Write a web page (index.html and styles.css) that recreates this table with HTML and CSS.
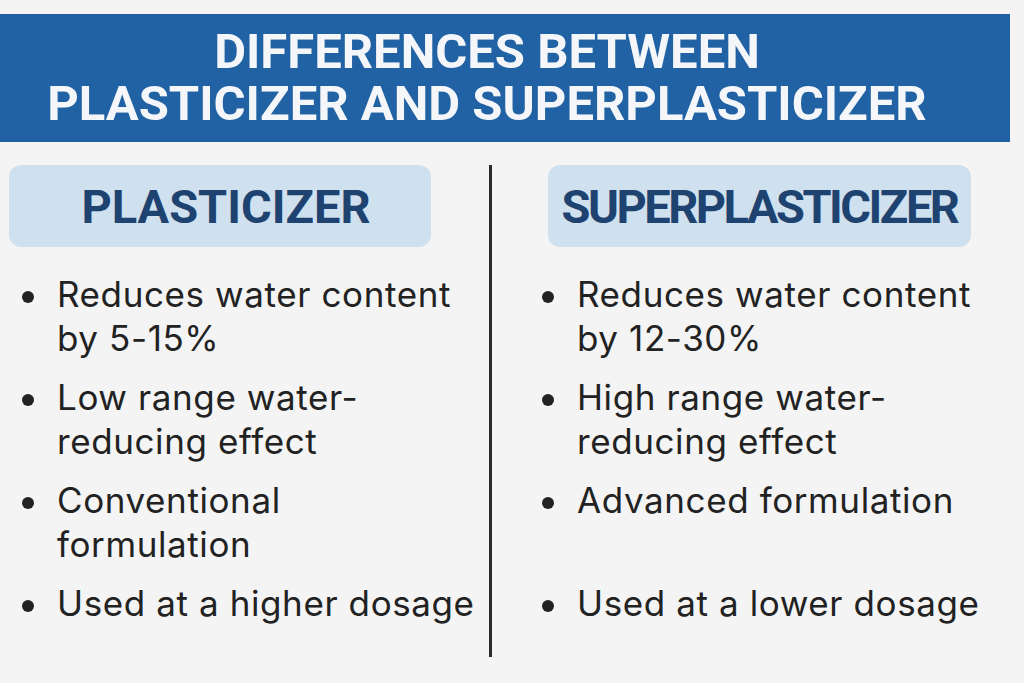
FILE: index.html
```html
<!DOCTYPE html>
<html lang="en">
  <head>
    <meta charset="UTF-8" />
    <meta name="viewport" content="width=device-width, initial-scale=1.0" />
    <title>Plasticizer vs Superplasticizer</title>
    <link rel="stylesheet" href="styles.css">
  </head>
  <body>
    <div class="banner">
      <h1>Differences between<br />plasticizer and superplasticizer</h1>
    </div>

    <div class="compare">
      <div class="column column-left">
        <div class="pill"><h2>Plasticizer</h2></div>
        <ul class="points">
          <li>Reduces water content by 5-15%</li>
          <li>Low range water-reducing effect</li>
          <li>Conventional formulation</li>
          <li>Used at a higher dosage</li>
        </ul>
      </div>

      <div class="divider"></div>

      <div class="column column-right">
        <div class="pill"><h2 class="tight">Superplasticizer</h2></div>
        <ul class="points">
          <li>Reduces water content by 12-30%</li>
          <li>High range water-reducing effect</li>
          <li>Advanced formulation</li>
          <li>Used at a lower dosage</li>
        </ul>
      </div>
    </div>
  </body>
</html>
```

FILE: styles.css
```css
/* Reset default margin and padding */
body,
h1,
h2,
ul,
li {
  margin: 0;
  padding: 0;
}

body {
  font-family: Inter, Roboto, "Liberation Sans", Arial, sans-serif;
  background-color: #f4f4f4;
  color: #222222;
}

/* Title bar */
.banner {
  margin: 14px 14px 0 0;
  height: 128px;
  background-color: #2062a3;
  display: flex;
  align-items: center;
  justify-content: center;
  padding-right: 36px;
}

.banner h1 {
  font-family: Roboto, "Liberation Sans", Arial, sans-serif;
  color: #f4f6f9;
  font-size: 49px;
  font-weight: 700;
  line-height: 52px;
  text-align: center;
  text-transform: uppercase;
}

/* Two columns with a rule between */
.compare {
  display: grid;
  grid-template-columns: 489px 3px 1fr;
  margin-top: 23px;
}

.divider {
  height: 492px;
  background-color: #2a2a2a;
}

.pill {
  height: 82px;
  background-color: #cfe0ef;
  border-radius: 12px;
  display: flex;
  align-items: center;
  justify-content: center;
}

.pill h2 {
  font-family: Roboto, "Liberation Sans", Arial, sans-serif;
  color: #1e4370;
  font-size: 47px;
  font-weight: 700;
  text-transform: uppercase;
}

.pill h2.tight {
  letter-spacing: -2.5px;
}

.column-left .pill {
  margin-left: 9px;
  width: 422px;
  padding-left: 12px;
  box-sizing: border-box;
}

.column-right .pill {
  margin-left: 56px;
  width: 423px;
}

.points {
  list-style: none;
  margin-top: 25px;
}

.points li {
  display: flex;
  align-items: flex-start;
  gap: 23px;
  min-height: 88px;
  margin-bottom: 15px;
  font-size: 35px;
  line-height: 44px;
  letter-spacing: 0.6px;
}

.points li::before {
  content: "";
  flex: none;
  width: 12px;
  height: 12px;
  margin-top: 19px;
  border-radius: 50%;
  background-color: #222222;
}

.column-left .points {
  padding-left: 22px;
  width: 478px;
  box-sizing: border-box;
}

.column-right .points {
  padding-left: 50px;
  width: 470px;
}
```
